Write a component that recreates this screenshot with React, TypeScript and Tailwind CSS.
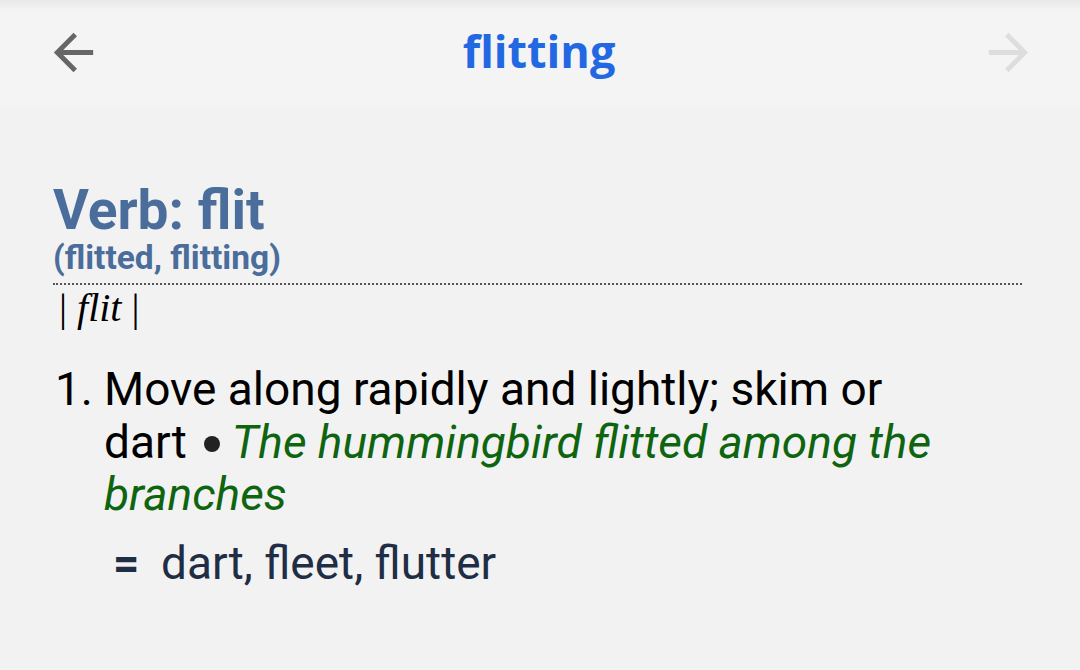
import React from "react";

const ArrowBack = ({ color }: { color: string }) => (
  <svg width="59" height="59" viewBox="0 0 24 24" fill={color}>
    <path d="M20 11H7.83l5.59-5.59L12 4l-8 8 8 8 1.41-1.41L7.83 13H20v-2z" />
  </svg>
);
const ArrowForward = ({ color }: { color: string }) => (
  <svg width="59" height="59" viewBox="0 0 24 24" fill={color}>
    <path d="M12 4l-1.41 1.41L16.17 11H4v2h12.17l-5.58 5.59L12 20l8-8z" />
  </svg>
);

export default function App() {
  return (
    <div className="w-[1080px] h-[670px] bg-[#f2f2f2] overflow-hidden" style={{ fontFamily: "Roboto, sans-serif" }}>
      <div className="relative h-[108px] bg-[#f4f4f4] flex items-center justify-between pl-[44px] pr-[42px]">
        <div className="absolute top-0 left-0 right-0 h-[10px] bg-gradient-to-b from-[#e8e8e8] to-[#f4f4f4]" />
        <div className="mt-[-3px]"><ArrowBack color="#666666" /></div>
        <div className="text-[45px] font-bold text-[#2268e2] mt-[-6px] mr-[4px]" style={{ fontFamily: "'Open Sans', sans-serif" }}>flitting</div>
        <div className="mt-[-3px]"><ArrowForward color="#dddddd" /></div>
      </div>
      <div className="pl-[53px] pr-[58px] pt-[74px]">
        <div className="text-[55px] leading-[56px] font-bold text-[#4a6d9c]">Verb: flit</div>
        <div className="text-[33.5px] leading-[40px] font-bold text-[#4a6d9c]">(flitted, flitting)</div>
        <div className="border-t-[2px] border-dotted border-[#555] mt-[5px]" />
        <div className="text-[40px] leading-[44px] text-black pl-[6px] mt-[1px]" style={{ fontFamily: "'Liberation Serif', serif" }}>
          | <i>flit</i> |
        </div>
        <div className="mt-[33px] flex text-[46px] leading-[52.5px] text-black">
          <div className="w-[51px] shrink-0 pl-[2px]">1.</div>
          <div className="w-[850px]">
            <div>
              Move along rapidly and lightly; skim or dart
              <span className="inline-block w-[16px] h-[16px] rounded-full bg-[#222] align-middle relative top-[-1px] ml-[17px] mr-[12px]" />
              <i className="text-[#0f6410]">The hummingbird flitted among the branches</i>
            </div>
            <div className="flex items-baseline mt-[16.5px] text-[#1f2d45]">
              <span className="font-bold w-[57px] pl-[9px]">=</span>
              <span>dart, fleet, flutter</span>
            </div>
          </div>
        </div>
      </div>
    </div>
  );
}
